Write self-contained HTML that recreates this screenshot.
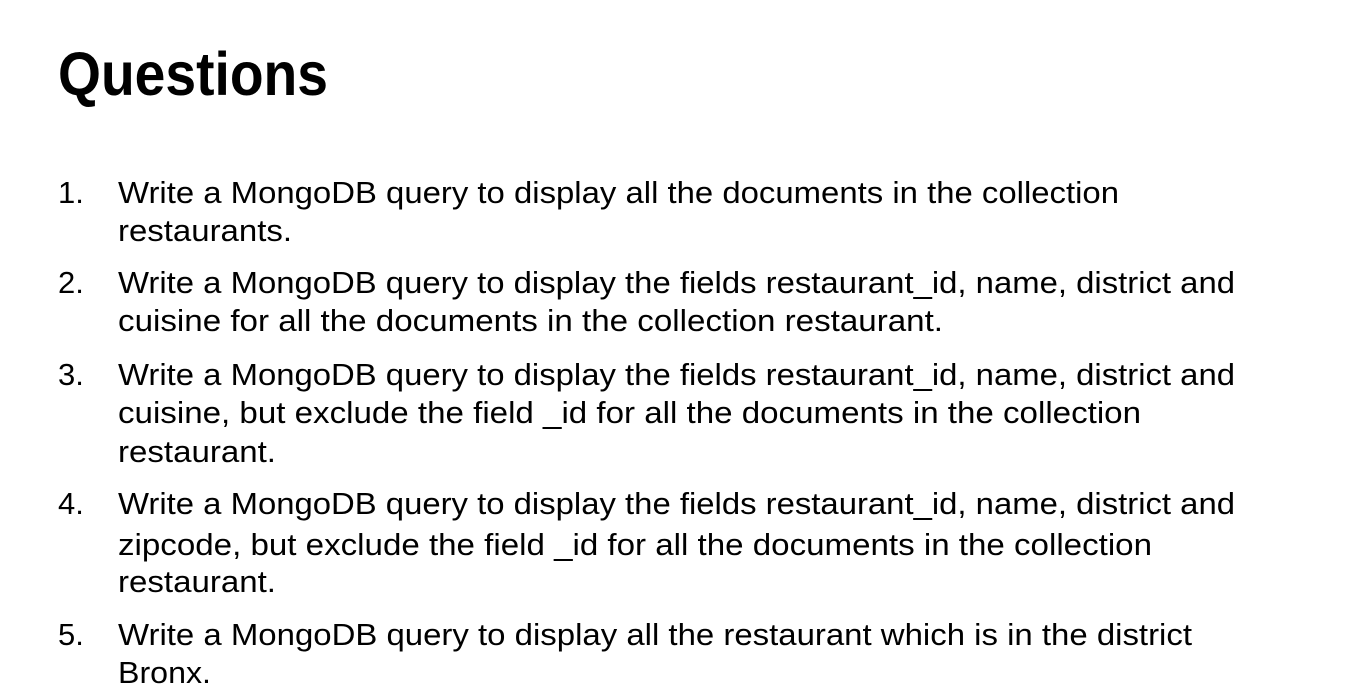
<!DOCTYPE html>
<html><head><meta charset="utf-8"><style>
html,body{margin:0;padding:0;background:#fff;width:1346px;height:696px;overflow:hidden}
svg{display:block}
text{font-family:"Liberation Sans",sans-serif;fill:#000}
</style></head><body>
<svg width="1346" height="696" xmlns="http://www.w3.org/2000/svg">
<text x="58" y="95" font-size="61" font-weight="bold" textLength="270" lengthAdjust="spacingAndGlyphs">Questions</text>
<g font-size="31">
<text x="58" y="203">1.</text>
<text x="118" y="203" textLength="1001" lengthAdjust="spacingAndGlyphs">Write a MongoDB query to display all the documents in the collection</text>
<text x="118" y="241" textLength="174" lengthAdjust="spacingAndGlyphs">restaurants.</text>
<text x="58" y="293">2.</text>
<text x="118" y="293" textLength="1117" lengthAdjust="spacingAndGlyphs">Write a MongoDB query to display the fields restaurant_id, name, district and</text>
<text x="118" y="331" textLength="825" lengthAdjust="spacingAndGlyphs">cuisine for all the documents in the collection restaurant.</text>
<text x="58" y="385">3.</text>
<text x="118" y="385" textLength="1117" lengthAdjust="spacingAndGlyphs">Write a MongoDB query to display the fields restaurant_id, name, district and</text>
<text x="118" y="423" textLength="1023" lengthAdjust="spacingAndGlyphs">cuisine, but exclude the field _id for all the documents in the collection</text>
<text x="118" y="462" textLength="158" lengthAdjust="spacingAndGlyphs">restaurant.</text>
<text x="58" y="514">4.</text>
<text x="118" y="514" textLength="1117" lengthAdjust="spacingAndGlyphs">Write a MongoDB query to display the fields restaurant_id, name, district and</text>
<text x="118" y="555" textLength="1034" lengthAdjust="spacingAndGlyphs">zipcode, but exclude the field _id for all the documents in the collection</text>
<text x="118" y="592" textLength="158" lengthAdjust="spacingAndGlyphs">restaurant.</text>
<text x="58" y="645">5.</text>
<text x="118" y="645" textLength="1074" lengthAdjust="spacingAndGlyphs">Write a MongoDB query to display all the restaurant which is in the district</text>
<text x="118" y="683" textLength="93" lengthAdjust="spacingAndGlyphs">Bronx.</text>
</g>
</svg>
</body></html>
